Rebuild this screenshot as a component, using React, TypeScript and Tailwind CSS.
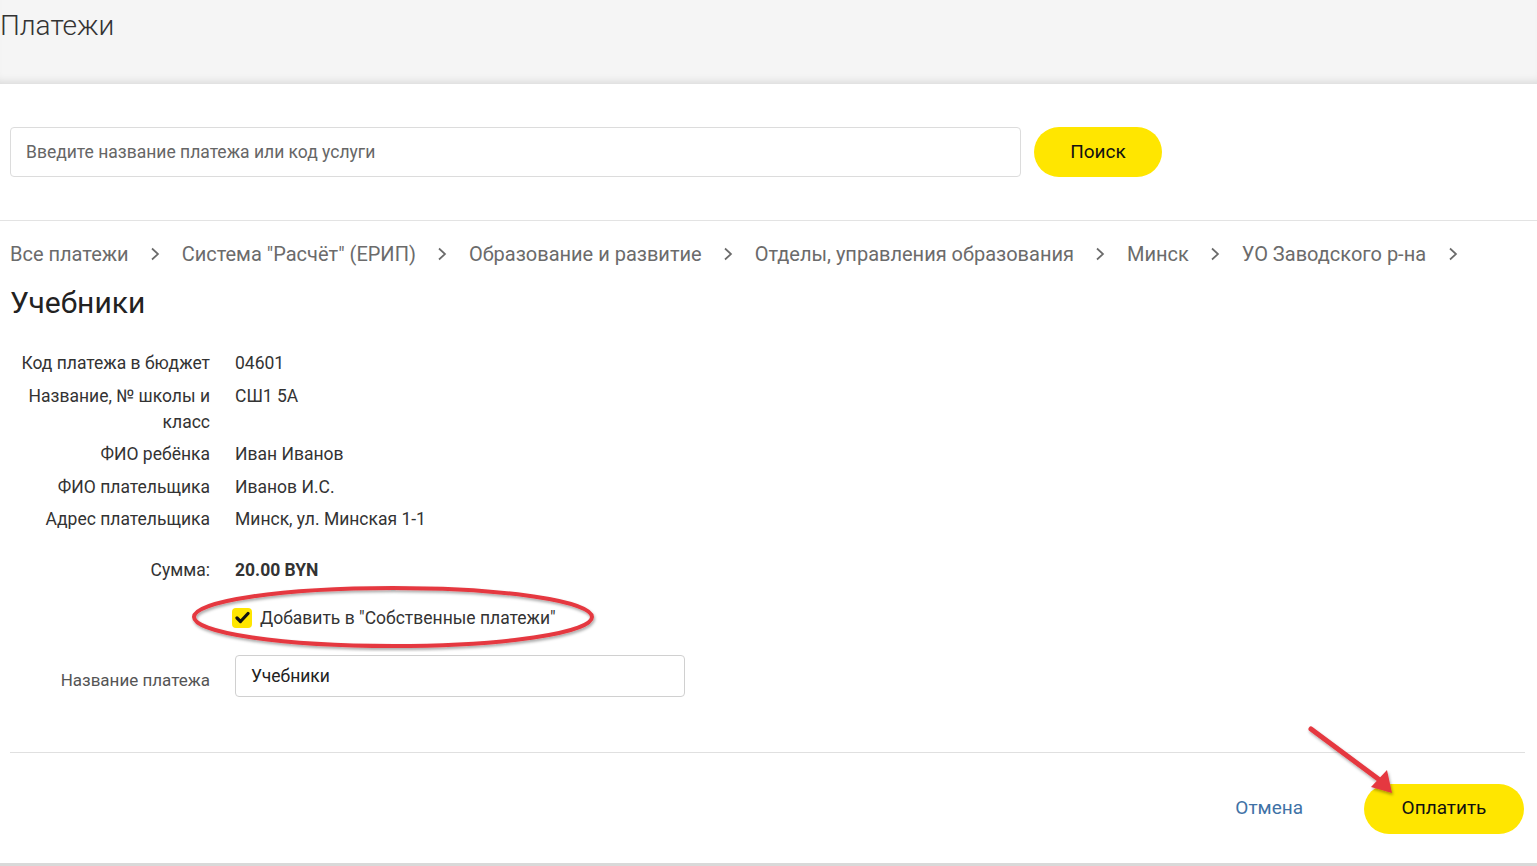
import { useState } from "react";

const crumbs = [
  "Все платежи",
  'Система "Расчёт" (ЕРИП)',
  "Образование и развитие",
  "Отделы, управления образования",
  "Минск",
  "УО Заводского р-на",
];

const details: [string, string][] = [
  ["Код платежа в бюджет", "04601"],
  ["Название, № школы и класс", "СШ1 5А"],
  ["ФИО ребёнка", "Иван Иванов"],
  ["ФИО плательщика", "Иванов И.С."],
  ["Адрес плательщика", "Минск, ул. Минская 1-1"],
];

function Chevron() {
  return (
    <svg width="10" height="14" viewBox="0 0 10 14" className="mx-[21.5px] shrink-0">
      <path d="M2 1.5 L8 7 L2 12.5" fill="none" stroke="#6b6b6b" strokeWidth="1.7" />
    </svg>
  );
}

export default function App() {
  const [query, setQuery] = useState("");
  const [own, setOwn] = useState(true);
  const [title, setTitle] = useState("Учебники");

  return (
    <div className="relative min-h-[866px] bg-white font-['Roboto',sans-serif] text-[#222]">
      <div className="h-[84px] bg-[#f5f5f5] shadow-[inset_0_-8px_8px_-6px_rgba(0,0,0,0.12)]">
        <h1 className="text-[28px] font-light leading-[52px] text-[#333]">Платежи</h1>
      </div>

      <div className="flex items-center gap-[13px] px-[10px] pt-[43px] pb-[43px]">
        <input
          className="h-[50px] w-[1011px] rounded-[4px] border border-[#dcdcdc] px-[15px] text-[17.5px] text-[#333] placeholder:text-[#666] focus:outline-none"
          placeholder="Введите название платежа или код услуги"
          value={query}
          onChange={(e) => setQuery(e.target.value)}
        />
        <button className="h-[50px] w-[128px] rounded-full bg-[#ffe600] text-[19px] text-[#111]">Поиск</button>
      </div>

      <div className="border-t border-[#e3e3e3]" />

      <div className="px-[10px]">
        <nav className="flex items-center pt-[20px] text-[20px] leading-[26px] text-[#6b6b6b]">
          {crumbs.map((c) => (
            <div key={c} className="flex items-center">
              <span className="whitespace-nowrap">{c}</span>
              <Chevron />
            </div>
          ))}
        </nav>
        <h2 className="mt-[18px] text-[30px] leading-[36px] text-[#222]">Учебники</h2>

        <div className="mt-[26px] grid grid-cols-[200px_1fr] gap-x-[25px] text-[17.5px] leading-[26px] text-[#333]">
          {details.map(([k, v]) => (
            <div key={k} className="contents">
              <div className="py-[3.25px] text-right">{k}</div>
              <div className="py-[3.25px]">{v}</div>
            </div>
          ))}
          <div className="pt-[21px] text-right">Сумма:</div>
          <div className="pt-[21px] font-bold">20.00 BYN</div>
          <div />
          <label className="relative mt-[22px] -ml-[3px] flex cursor-pointer items-center gap-[8px]">
            <span
              className="flex h-[20px] w-[20px] items-center justify-center rounded-[4px] bg-[#ffe600]"
              onClick={() => setOwn(!own)}
            >
              {own && (
                <svg width="15" height="13" viewBox="0 0 15 13">
                  <path d="M2 7 L5.5 10.5 L13 2.5" fill="none" stroke="#111" strokeWidth="3.2" strokeLinecap="round" strokeLinejoin="round" />
                </svg>
              )}
            </span>
            <span>Добавить в "Собственные платежи"</span>
            <svg
              className="pointer-events-none absolute left-[-42px] top-[-21px]"
              width="410"
              height="68"
              viewBox="0 0 410 68"
            >
              <defs>
                <filter id="sh" x="-10%" y="-30%" width="120%" height="160%">
                  <feDropShadow dx="1" dy="2" stdDeviation="1.5" floodColor="#000" floodOpacity="0.35" />
                </filter>
              </defs>
              <ellipse cx="203" cy="33" rx="199" ry="29" fill="none" stroke="#e53940" strokeWidth="4" filter="url(#sh)" />
            </svg>
          </label>
          <div className="mt-[24px] self-center pt-[8px] text-right text-[17px] text-[#555]">Название платежа</div>
          <input
            className="mt-[24px] h-[42px] w-[450px] rounded-[4px] border border-[#d0d0d0] px-[15px] text-[17.5px] text-[#222] focus:outline-none"
            value={title}
            onChange={(e) => setTitle(e.target.value)}
          />
        </div>

        <div className="mt-[55px] mr-[2px] border-t border-[#e0e0e0]" />

        <div className="flex items-center justify-end gap-[61px] pt-[31px] pr-[3px]">
          <a className="text-[19px] text-[#3f72a6]" href="#">Отмена</a>
          <button className="relative h-[50px] w-[160px] rounded-full bg-[#ffe600] text-[19px] text-[#111]">
            Оплатить
            <svg
              className="pointer-events-none absolute left-[-60px] top-[-60px]"
              width="100"
              height="80"
              viewBox="0 0 100 80"
            >
              <defs>
                <filter id="sh2" x="-20%" y="-20%" width="140%" height="140%">
                  <feDropShadow dx="1" dy="2" stdDeviation="1.5" floodColor="#000" floodOpacity="0.35" />
                </filter>
              </defs>
              <g filter="url(#sh2)">
                <line x1="7" y1="5" x2="77" y2="57" stroke="#e53940" strokeWidth="5" strokeLinecap="round" />
                <path d="M88 69 L67 63 L83 46 Z" fill="#e53940" />
              </g>
            </svg>
          </button>
        </div>
      </div>

      <div className="absolute bottom-0 left-0 h-[3px] w-full bg-[#d9d9d9]" />
    </div>
  );
}
